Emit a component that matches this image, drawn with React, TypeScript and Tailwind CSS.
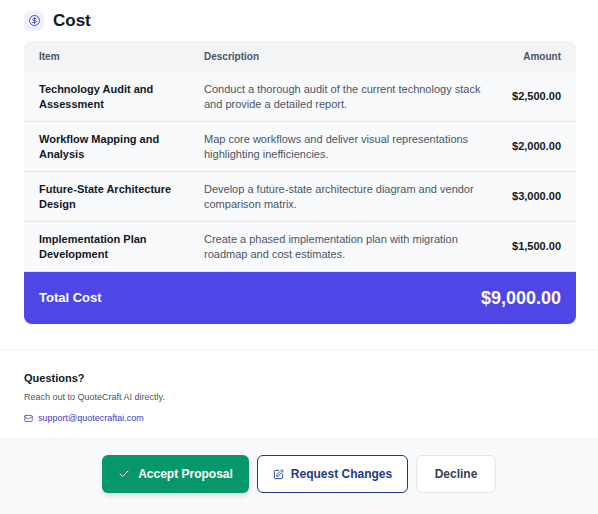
import { Check, DollarSign, Mail, SquarePen } from 'lucide-react';

const rows = [
  { item: 'Technology Audit and Assessment', desc: 'Conduct a thorough audit of the current technology stack and provide a detailed report.', amount: '$2,500.00' },
  { item: 'Workflow Mapping and Analysis', desc: 'Map core workflows and deliver visual representations highlighting inefficiencies.', amount: '$2,000.00' },
  { item: 'Future-State Architecture Design', desc: 'Develop a future-state architecture diagram and vendor comparison matrix.', amount: '$3,000.00' },
  { item: 'Implementation Plan Development', desc: 'Create a phased implementation plan with migration roadmap and cost estimates.', amount: '$1,500.00' },
];

export default function App() {
  return (
    <div className="w-[598px] h-[514px] bg-white overflow-hidden" style={{ fontFamily: '"Liberation Sans", Arial, sans-serif' }}>
      <div className="pl-6 pr-[22px] pt-[10px] pb-[25px] border-b border-gray-100">
        <div className="flex items-center gap-[9px] h-[21px]">
          <div className="w-[20px] h-[20px] rounded-md bg-[#eef0fd] flex items-center justify-center">
            <div className="w-[11px] h-[11px] rounded-full border-[1.5px] border-[#4f46e5] flex items-center justify-center">
              <DollarSign className="w-[7px] h-[7px] text-[#4f46e5]" strokeWidth={3} />
            </div>
          </div>
          <h2 className="text-[17px] font-bold text-gray-900">Cost</h2>
        </div>
        <div className="mt-[10px] rounded-lg overflow-hidden bg-[#f9fafb]">
          <div className="flex items-center h-[31px] bg-[#f3f4f6] text-[10px] font-semibold text-gray-600 px-[15px]">
            <div className="w-[165px]">Item</div>
            <div className="flex-1">Description</div>
            <div>Amount</div>
          </div>
          {rows.map((r) => (
            <div key={r.item} className="flex items-center h-[50px] px-[15px] border-b border-gray-200 last:border-b-0">
              <div className="w-[165px] pr-4 text-[11px] font-bold text-gray-900 leading-[15px]">{r.item}</div>
              <div className="flex-1 pr-3 text-[11px] text-gray-600 leading-[15px]">{r.desc}</div>
              <div className="text-[11px] font-bold text-gray-900">{r.amount}</div>
            </div>
          ))}
          <div className="flex items-center justify-between h-[52px] bg-[#4f46e5] px-[15px] text-white">
            <span className="text-[13px] font-bold">Total Cost</span>
            <span className="text-[18px] font-bold">$9,000.00</span>
          </div>
        </div>
      </div>
      <div className="px-6 pt-[20px] pb-[12px]">
        <div className="text-[11px] font-bold text-gray-900">Questions?</div>
        <div className="mt-[4px] text-[9px] text-gray-600">Reach out to QuoteCraft AI directly.</div>
        <div className="mt-[8px] flex items-center gap-[5px] text-[9px] text-[#4338ca]">
          <Mail className="w-[9px] h-[9px]" />
          <span>support@quotecraftai.com</span>
        </div>
      </div>
      <div className="h-[76px] bg-[#f9fafb] border-t border-gray-100 flex items-center justify-center gap-[8px] pb-[4px]">
        <button className="w-[147px] h-[38px] rounded-md bg-[#059669] text-white text-[12px] font-bold flex items-center justify-center gap-[8px] shadow-md">
          <Check className="w-[12px] h-[12px]" /> Accept Proposal
        </button>
        <button className="w-[151px] h-[38px] rounded-md border border-[#1e3a8a] bg-white text-[#1e3a8a] text-[12px] font-bold flex items-center justify-center gap-[7px]">
          <SquarePen className="w-[11px] h-[11px]" /> Request Changes
        </button>
        <button className="w-[80px] h-[38px] rounded-md border border-gray-200 bg-white text-gray-700 text-[12px] font-bold">Decline</button>
      </div>
    </div>
  );
}
